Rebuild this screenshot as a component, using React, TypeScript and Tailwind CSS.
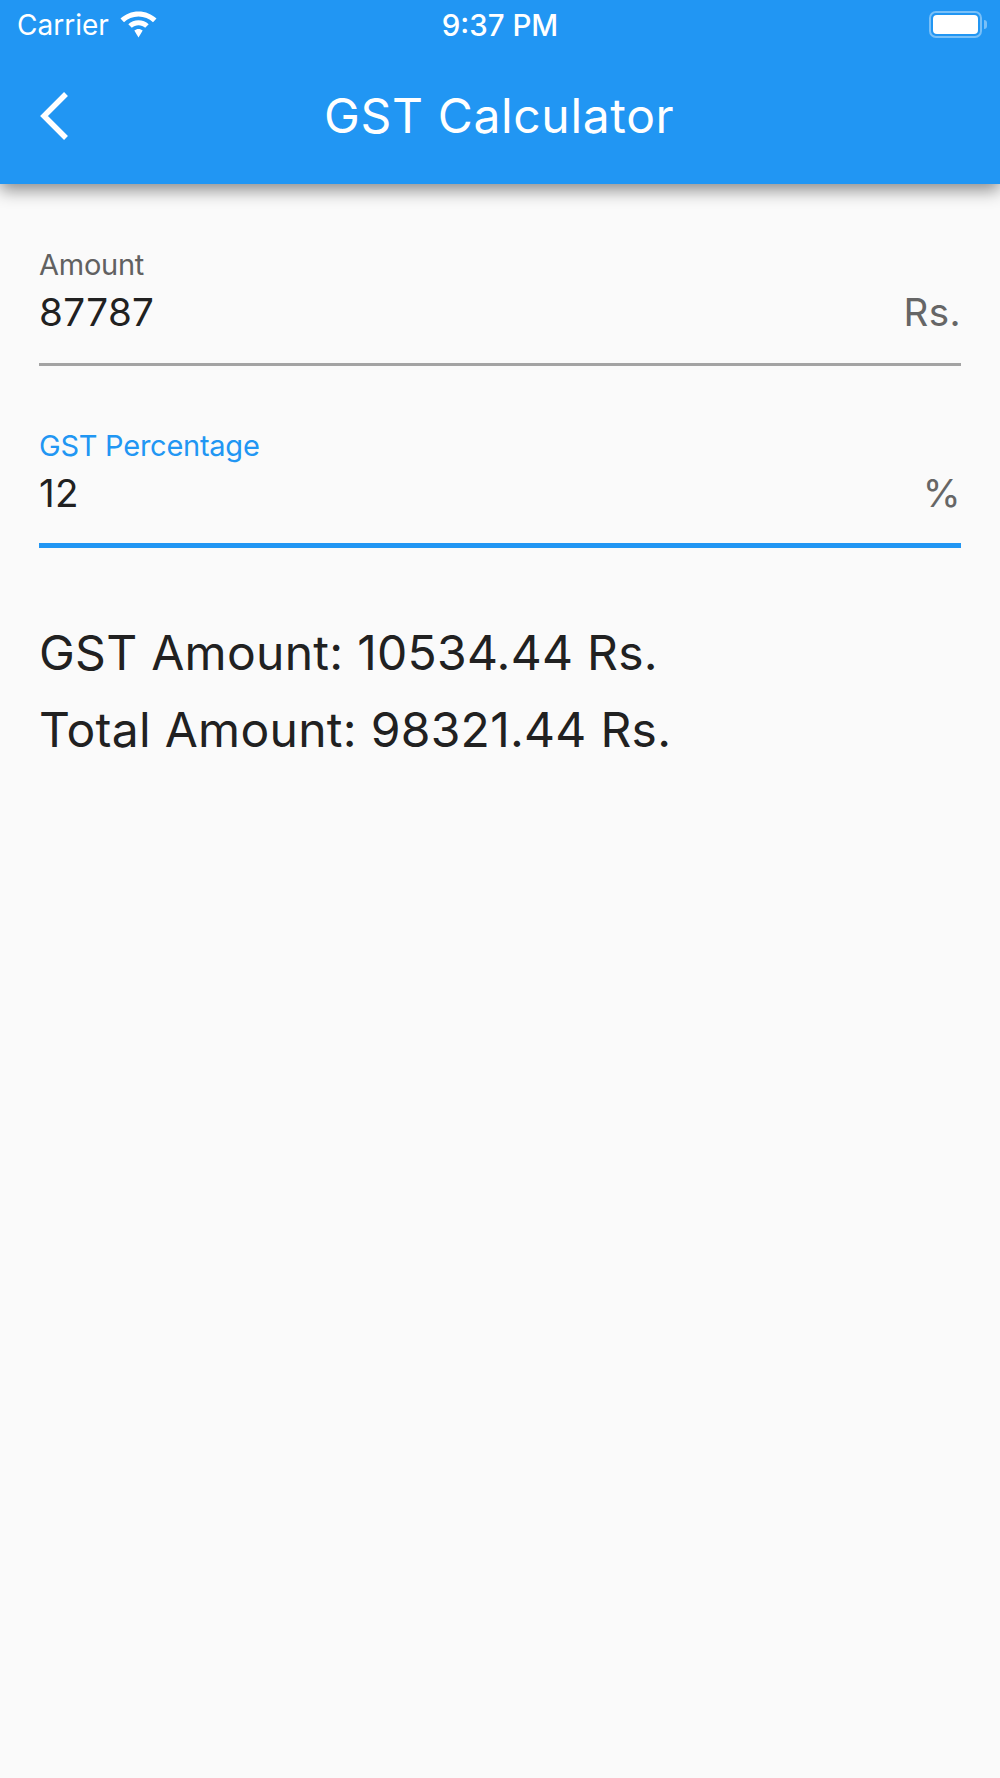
import React from 'react';

const StatusBar = () => {
    return (
        <div className="grid h-[48px] grid-cols-3 items-center pl-[17px] pr-[13px] text-white">
            <div className="flex items-center gap-[11px]">
                <span className="mt-[2px] text-[28px] leading-[34px]">Carrier</span>
                <svg width="37" height="27" viewBox="0 0 37 27" fill="white">
                    <path d="M18.5 0.5C11.5 0.5 5.2 3.2 0.5 7.6L4 11.2C7.8 7.7 12.9 5.6 18.5 5.6C24.1 5.6 29.2 7.7 33 11.2L36.5 7.6C31.8 3.2 25.5 0.5 18.5 0.5Z" />
                    <path d="M18.5 9.2C14.6 9.2 11 10.7 8.3 13.2L11.8 16.8C13.6 15.2 15.9 14.2 18.5 14.2C21.1 14.2 23.4 15.2 25.2 16.8L28.7 13.2C26 10.7 22.4 9.2 18.5 9.2Z" />
                    <path d="M18.5 18C16.9 18 15.5 18.6 14.3 19.6L18.5 26.5L22.7 19.6C21.5 18.6 20.1 18 18.5 18Z" />
                </svg>
            </div>
            <span className="mt-[2px] pr-[4px] text-center text-[29.5px] leading-[34px] font-medium whitespace-nowrap">9:37 PM</span>
            <div className="flex items-center justify-end gap-[2px]">
                <div className="flex h-[27px] w-[53px] items-center justify-center rounded-[7px] border-2 border-white/40">
                    <div className="h-[19px] w-[45px] rounded-[4px] bg-white" />
                </div>
                <div className="h-[9px] w-[3px] rounded-r-full bg-white/40" />
            </div>
        </div>
    )
}

const AppBar = () => {
    return (
        <header className="relative z-10 h-[184px] bg-[#2196f3] shadow-[0_6px_16px_rgba(0,0,0,0.45)]">
            <StatusBar />
            <div className="flex h-[135px] items-center">
                <div className="flex w-[324px] pl-[39px]">
                    <svg width="29" height="48" viewBox="0 0 29 48" fill="none" stroke="white" strokeWidth="5.5">
                        <path d="M27 2L5 24L27 46" />
                    </svg>
                </div>
                <h1 className="text-[48px] leading-[58px] font-[375] tracking-[0.65px] text-white">GST Calculator</h1>
            </div>
        </header>
    )
}

interface FieldProps {
    label: string;
    value: string;
    suffix: string;
    focused?: boolean;
}

const Field = ({ label, value, suffix, focused = false }: FieldProps) => {
    return (
        <div className={focused ? "border-b-[5px] border-[#2196f3] pb-[24px]" : "border-b-[3px] border-[#a3a3a3] pb-[25px]"}>
            <p className={focused ? "text-[29px] leading-[42px] tracking-[-0.25px] text-[#2196f3]" : "text-[29px] leading-[42px] tracking-[-0.25px] text-[#616161]"}>
                {label}
            </p>
            <div className="flex items-center justify-between">
                <span className="text-[38.6px] leading-[52px] font-[375] tracking-[0.38px] text-[#212121]">{value}</span>
                <span className="text-[38.6px] leading-[52px] font-[375] tracking-[0.38px] text-[#666666]">{suffix}</span>
            </div>
        </div>
    )
}

export default function App() {
    return (
        <div className="flex min-h-[1778px] flex-col bg-[#fafafa] font-['Inter',sans-serif]">
            <AppBar />
            <main className="px-[39px] pt-[60px]">
                <div className="flex flex-col gap-[59px]">
                    <Field label="Amount" value="87787" suffix="Rs." />
                    <Field label="GST Percentage" value="12" suffix="%" focused />
                </div>
                <div className="pt-[66px] text-[48px] leading-[77px] font-[375] tracking-[0.28px] text-[#212121]">
                    <p>GST Amount: 10534.44 Rs.</p>
                    <p>Total Amount: 98321.44 Rs.</p>
                </div>
            </main>
        </div>
    )
}
